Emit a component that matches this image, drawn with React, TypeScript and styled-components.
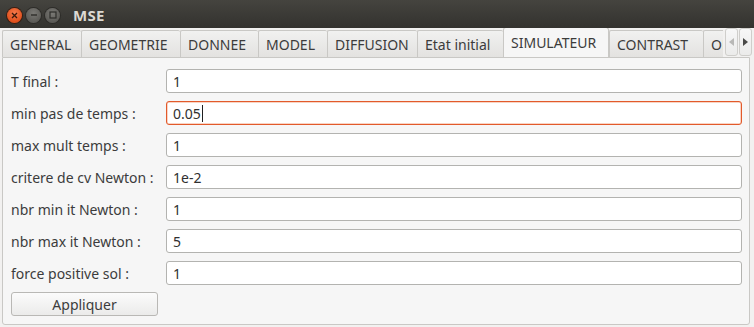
import React from "react";
import styled, { createGlobalStyle, css } from "styled-components";

const Global = createGlobalStyle`
  html, body { margin: 0; padding: 0; background: #f2f1f0; }
  body { font-family: "Noto Sans", "DejaVu Sans", sans-serif; color: #3c3c3c; }
  * { box-sizing: border-box; }
`;

const Window = styled.div`
  width: 754px;
  height: 327px;
  display: flex;
  flex-direction: column;
  background: #f2f1f0;
  overflow: hidden;
`;

const TitleBar = styled.div`
  height: 28px;
  flex: none;
  display: flex;
  align-items: center;
  padding-left: 7px;
  gap: 4px;
  background: linear-gradient(#45443f, #3a3935 60%, #34332f);
`;

const WinButton = styled.div<{ $kind: "close" | "min" | "max" }>`
  width: 15px;
  height: 15px;
  border-radius: 50%;
  display: flex;
  align-items: center;
  justify-content: center;
  margin-top: 2px;
  ${(p) =>
    p.$kind === "close"
      ? css`
          background: radial-gradient(circle at 50% 35%, #f67a4c, #e2501c 70%);
          box-shadow: 0 0 0 1px #3a1e12;
        `
      : css`
          background: radial-gradient(circle at 50% 35%, #7a7975, #5c5b57 70%);
          box-shadow: 0 0 0 1px #2d2c29;
        `}
`;

const Title = styled.div`
  margin-left: 9px;
  margin-top: 1px;
  font-family: "Noto Sans", sans-serif;
  font-weight: 700;
  font-size: 15px;
  color: #dcd9d2;
  letter-spacing: 0.3px;
`;

const TabRow = styled.div`
  height: 29px;
  flex: none;
  display: flex;
  align-items: flex-end;
  padding: 0 2px;
`;

const TabStrip = styled.div`
  flex: 1;
  display: flex;
  align-items: flex-end;
  overflow: hidden;
  height: 100%;
`;

const Tab = styled.div<{ $w: number; $active?: boolean }>`
  flex: none;
  width: ${(p) => p.$w}px;
  height: 27px;
  display: flex;
  align-items: center;
  padding-left: 7px;
  white-space: nowrap;
  font-size: 14px;
  color: #3c3c3c;
  border: 1px solid #c9c8c5;
  border-bottom: none;
  border-right: none;
  border-radius: 2px 2px 0 0;
  background: linear-gradient(#f1f1f0, #e3e2e0);
  ${(p) =>
    p.$active &&
    css`
      background: #f6f6f6;
      border-right: 1px solid #c9c8c5;
      border-radius: 3px 3px 0 0;
      padding-bottom: 2px;
      position: relative;
      z-index: 2;
      margin-bottom: -1px;
      height: 31px;
    `}
`;

const Arrows = styled.div`
  flex: none;
  display: flex;
  gap: 1px;
  align-items: flex-end;
  height: 100%;
  padding-bottom: 1px;
  margin-left: 2px;
`;

const ArrowBtn = styled.div`
  width: 13px;
  height: 28px;
  display: flex;
  align-items: center;
  justify-content: center;
  border: 1px solid #cfcecb;
  border-radius: 3px;
  background: linear-gradient(#f7f7f7, #ebebea);
`;

const Panel = styled.div`
  flex: 1;
  margin: 0 4px 2px 2px;
  background: #f6f6f6;
  border: 1px solid #c9c8c5;
  border-radius: 0 0 3px 3px;
  padding: 11px 7px 0 8px;
  display: flex;
  flex-direction: column;
`;

const Form = styled.div`
  display: grid;
  grid-template-columns: 155px 1fr;
  row-gap: 8px;
  align-items: center;
`;

const Label = styled.div`
  font-size: 14px;
  color: #3c3c3c;
  white-space: nowrap;
`;

const Field = styled.div<{ $focused?: boolean }>`
  height: 24px;
  display: flex;
  align-items: center;
  padding-left: 6px;
  font-size: 14px;
  color: #303030;
  background: #ffffff;
  border: 1px solid ${(p) => (p.$focused ? "#e25a2b" : "#b3b3b0")};
  border-radius: 3px;
  ${(p) =>
    p.$focused &&
    css`
      box-shadow: inset 0 0 0 0.5px #f4a98a;
    `}
`;

const Caret = styled.span`
  display: inline-block;
  width: 1px;
  height: 17px;
  background: #202020;
  margin-left: 1px;
`;

const Button = styled.div`
  margin-top: 7px;
  width: 147px;
  height: 24px;
  display: flex;
  align-items: center;
  justify-content: center;
  font-size: 14px;
  color: #3c3c3c;
  border: 1px solid #b9b8b5;
  border-radius: 3px;
  background: linear-gradient(#fbfbfb, #ebebea);
`;

const tabs: { label: string; w: number; active?: boolean }[] = [
  { label: "GENERAL", w: 79 },
  { label: "GEOMETRIE", w: 99 },
  { label: "DONNEE", w: 78 },
  { label: "MODEL", w: 69 },
  { label: "DIFFUSION", w: 90 },
  { label: "Etat initial", w: 86 },
  { label: "SIMULATEUR", w: 106, active: true },
  { label: "CONTRAST", w: 94 },
  { label: "OPTIONS", w: 80 },
];

const rows: { label: string; value: string; focused?: boolean }[] = [
  { label: "T final :", value: "1" },
  { label: "min pas de temps :", value: "0.05", focused: true },
  { label: "max mult temps :", value: "1" },
  { label: "critere de cv Newton :", value: "1e-2" },
  { label: "nbr min it Newton :", value: "1" },
  { label: "nbr max it Newton :", value: "5" },
  { label: "force positive sol :", value: "1" },
];

export default function App() {
  return (
    <>
      <Global />
      <Window>
        <TitleBar>
          <WinButton $kind="close">
            <svg width="7" height="7" viewBox="0 0 7 7">
              <path d="M1 1L6 6M6 1L1 6" stroke="#3b1a0c" strokeWidth="1.3" />
            </svg>
          </WinButton>
          <WinButton $kind="min">
            <svg width="8" height="8" viewBox="0 0 8 8">
              <path d="M1 4H7" stroke="#2e2d2a" strokeWidth="1.4" />
            </svg>
          </WinButton>
          <WinButton $kind="max">
            <svg width="8" height="8" viewBox="0 0 8 8">
              <rect x="1" y="1" width="6" height="6" fill="none" stroke="#2e2d2a" strokeWidth="1.2" />
            </svg>
          </WinButton>
          <Title>MSE</Title>
        </TitleBar>
        <TabRow>
          <TabStrip>
            {tabs.map((t) => (
              <Tab key={t.label} $w={t.w} $active={t.active}>
                {t.label}
              </Tab>
            ))}
          </TabStrip>
          <Arrows>
            <ArrowBtn>
              <svg width="5" height="8" viewBox="0 0 5 8">
                <path d="M5 0V8L0 4Z" fill="#b8b8b6" />
              </svg>
            </ArrowBtn>
            <ArrowBtn>
              <svg width="5" height="8" viewBox="0 0 5 8">
                <path d="M0 0V8L5 4Z" fill="#4a4a48" />
              </svg>
            </ArrowBtn>
          </Arrows>
        </TabRow>
        <Panel>
          <Form>
            {rows.map((r) => (
              <React.Fragment key={r.label}>
                <Label>{r.label}</Label>
                <Field $focused={r.focused}>
                  {r.value}
                  {r.focused && <Caret />}
                </Field>
              </React.Fragment>
            ))}
          </Form>
          <Button>Appliquer</Button>
        </Panel>
      </Window>
    </>
  );
}
